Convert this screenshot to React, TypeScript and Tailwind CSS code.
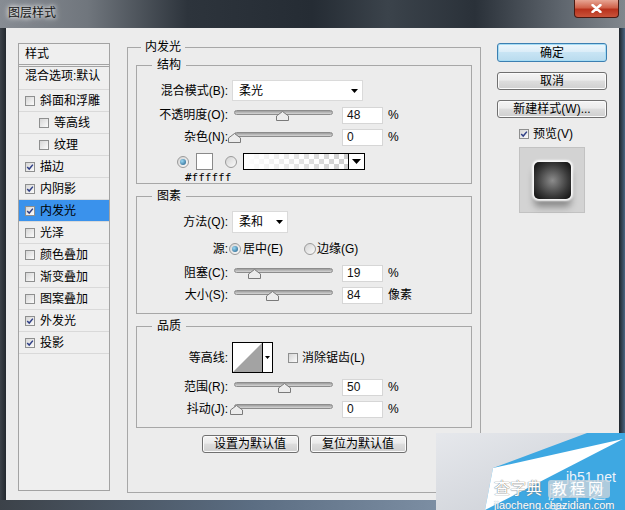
import React from 'react';

const F = "[font-family:'Liberation_Sans','Noto_Sans_CJK_SC',sans-serif]";

const effects = [
  { name: '斜面和浮雕', on: false },
  { name: '等高线', on: false, indent: true },
  { name: '纹理', on: false, indent: true },
  { name: '描边', on: true },
  { name: '内阴影', on: true },
  { name: '内发光', on: true, active: true },
  { name: '光泽', on: false },
  { name: '颜色叠加', on: false },
  { name: '渐变叠加', on: false },
  { name: '图案叠加', on: false },
  { name: '外发光', on: true },
  { name: '投影', on: true },
];

function Check({ on }: { on?: boolean }) {
  return (
    <span className="flex h-[10px] w-[10px] shrink-0 items-center justify-center border border-[#8e8f8f] bg-[linear-gradient(135deg,#d6d6d6,#fbfbfb)]">
      {on && (
        <svg viewBox="0 0 10 10" width="8" height="8">
          <path d="M1.5 5 L4 7.6 L8.6 2" fill="none" stroke="#2f3f86" strokeWidth="1.8" />
        </svg>
      )}
    </span>
  );
}

function Radio({ on }: { on?: boolean }) {
  return (
    <span className="flex h-[12px] w-[12px] shrink-0 items-center justify-center rounded-full border border-[#9a9a9a] bg-[linear-gradient(135deg,#d4d4d4,#fafafa)]">
      {on && <span className="h-[6px] w-[6px] rounded-full bg-[radial-gradient(circle_at_35%_35%,#9ad8f4,#1c5a85)]" />}
    </span>
  );
}

function Arrow() {
  return (
    <svg width="7" height="4" viewBox="0 0 7 4">
      <path d="M0 0 H7 L3.5 4 Z" fill="#000" />
    </svg>
  );
}

function Select({ value, w, h }: { value: string; w: string; h: string }) {
  return (
    <div className={`flex items-center justify-between border border-[#dadada] bg-white pl-[6px] pr-[4px] ${w} ${h}`}>
      <span>{value}</span>
      <Arrow />
    </div>
  );
}

function Slider({ pct }: { pct: number }) {
  return (
    <div className="relative h-[12px] w-[99px] shrink-0">
      <div className="absolute left-0 right-0 top-[1px] h-[5px] rounded-full border border-[#8c8c8c] bg-[linear-gradient(180deg,#9c9c9c,#d6d6d6)]" />
      <svg
        className="absolute top-[2px]"
        style={{ left: `calc(${pct}% - 6px)` }}
        width="13"
        height="10"
        viewBox="0 0 13 10"
      >
        <path d="M6.5 0.5 L12.5 5 V9.5 H0.5 V5 Z" fill="#ececec" stroke="#7a7a7a" />
      </svg>
    </div>
  );
}

function Field({ value }: { value: string }) {
  return (
    <div className="ml-[9px] flex h-[17px] w-[41px] items-center border border-[#d6d6d6] bg-white pl-[4px] text-[#111]">
      {value}
    </div>
  );
}

function SliderRow({ label, value, pct, unit = '%' }: { label: string; value: string; pct: number; unit?: string }) {
  return (
    <div className="flex h-[22px] items-center">
      <span className="w-[91px] shrink-0 text-right">{label}</span>
      <span className="ml-[6px]">
        <Slider pct={pct} />
      </span>
      <Field value={value} />
      <span className="ml-[5px]">{unit}</span>
    </div>
  );
}

function Btn({ children, primary, w, h }: { children: React.ReactNode; primary?: boolean; w: string; h: string }) {
  return (
    <div
      className={`flex items-center justify-center rounded-[3px] border ${w} ${h} ${
        primary
          ? 'border-[#3c7fb1] bg-[linear-gradient(180deg,#eef7fc_0%,#dcedf8_45%,#c8e4f4_50%,#b9dbee_100%)] shadow-[inset_0_0_0_1px_#a6dcf4]'
          : 'border-[#707070] bg-[linear-gradient(180deg,#f4f4f4_0%,#ebebeb_45%,#dddddd_50%,#cfcfcf_100%)] shadow-[inset_0_0_0_1px_#fbfbfb]'
      }`}
    >
      {children}
    </div>
  );
}

function GradientSwatch() {
  return (
    <div className="flex h-[17px] w-[122px] border border-black">
      <svg width="104" height="15" className="block">
        <defs>
          <pattern id="chk" width="10" height="10" patternUnits="userSpaceOnUse">
            <rect width="10" height="10" fill="#fff" />
            <rect width="5" height="5" fill="#cdcdcd" />
            <rect x="5" y="5" width="5" height="5" fill="#cdcdcd" />
          </pattern>
          <linearGradient id="fade" x1="0" x2="1">
            <stop offset="0" stopColor="#fff" stopOpacity="1" />
            <stop offset="1" stopColor="#fff" stopOpacity="0" />
          </linearGradient>
        </defs>
        <rect width="104" height="15" fill="url(#chk)" />
        <rect width="104" height="15" fill="url(#fade)" />
      </svg>
      <div className="flex w-[16px] items-center justify-center border-l border-black bg-white">
        <svg width="9" height="5" viewBox="0 0 9 5">
          <path d="M0 0 H9 L4.5 5 Z" fill="#000" />
        </svg>
      </div>
    </div>
  );
}

function Contour() {
  return (
    <div className="flex h-[31px] w-[41px] border border-black bg-white">
      <svg width="29" height="29" className="block">
        <path d="M0 29 L29 0 V29 Z" fill="#a3a3a3" />
      </svg>
      <div className="flex w-[10px] items-center justify-center border-l border-black bg-white">
        <svg width="5" height="3" viewBox="0 0 5 3">
          <path d="M0 0 H5 L2.5 3 Z" fill="#000" />
        </svg>
      </div>
    </div>
  );
}

function Watermark() {
  return (
    <div className="absolute left-[436px] top-[433px] h-[77px] w-[189px] overflow-hidden">
      <svg width="189" height="77" className="absolute inset-0">
        <defs>
          <linearGradient id="wmbg" x1="0" x2="1" y1="0" y2="1">
            <stop offset="0" stopColor="#e6e8ec" />
            <stop offset="1" stopColor="#c8ccd3" />
          </linearGradient>
        </defs>
        <rect width="189" height="77" fill="url(#wmbg)" />
        <path d="M151 0 H189 V77 H49 L57 35 Z" fill="#3ea8e2" />
        <path d="M57 35 L187 6 L49 77 Z" fill="#ffffff" />
      </svg>
      <span className="absolute left-[130px] top-[36px] text-[14px] leading-[16px] text-[#eef4fa]">jb51.net</span>
      <span className="absolute left-[112px] top-[50px] text-[18px] leading-[20px] tracking-[2px] text-white/80">脚本之家</span>
      <span className="absolute left-[58px] top-[47px] text-[16px] leading-[18px] text-white [text-shadow:0_0_1px_#777,0_0_1px_#777]">查字典</span>
      <span className="absolute left-[112px] top-[47px] flex h-[18px] w-[62px] items-center justify-center rounded-[3px] bg-[#c9d3dc]/80 text-[15px] tracking-[3px] text-white">教程网</span>
      <span className="absolute left-[58px] top-[66px] text-[11px] leading-[12px] text-white [text-shadow:0_0_1px_#5a7a99]">jiaocheng.chazidian.com</span>
    </div>
  );
}

export default function App() {
  return (
    <div className={`relative flex h-[510px] w-[625px] flex-col overflow-hidden bg-[#2c3239] text-[12px] text-black ${F}`}>
      {/* title bar */}
      <div className="flex h-[28px] shrink-0 items-start bg-[linear-gradient(90deg,#878c93_0%,#70767d_14%,#2d343c_30%,#252c34_50%,#3b434b_62%,#2a3139_76%,#5f666e_90%,#81878d_100%)]">
        <span className="ml-[8px] mt-[6px] leading-[14px] text-[#151515] [text-shadow:0_0_4px_#fff,0_0_7px_#fff]">图层样式</span>
        <div className="ml-auto mr-[6px] flex h-[18px] w-[45px] items-center justify-center rounded-b-[4px] border border-t-0 border-[#4a1a12] bg-[linear-gradient(180deg,#e7a593_0%,#d0624a_45%,#b8321c_55%,#c9533a_100%)]">
          <svg width="11" height="9" viewBox="0 0 11 9">
            <path d="M1.5 1 L9.5 8 M9.5 1 L1.5 8" stroke="#fff" strokeWidth="2.4" strokeLinecap="round" />
          </svg>
        </div>
      </div>

      <div className="flex h-[472px] shrink-0">
        <div className="w-[6px] bg-[linear-gradient(90deg,#3c4249,#23282e)]" />
        <div className="flex w-[613px] items-start bg-[#ececec]">
          {/* left list */}
          <div className="ml-[12px] mt-[15px] h-[448px] w-[92px] border border-[#a3a3a3] bg-[#efefef]">
            <div className="h-[21px] border-b border-[#a3a3a3] pl-[6px] leading-[20px]">样式</div>
            <div className="h-[2px] border-b border-[#a3a3a3]" />
            <div className="h-[23px] whitespace-nowrap border-b border-[#d9d9d9] pl-[6px] pt-[2px] leading-[14px]">混合选项:默认</div>
            {effects.map((e) => (
              <div
                key={e.name}
                className={`flex h-[22px] items-center border-b border-[#d9d9d9] ${e.indent ? 'pl-[20px]' : 'pl-[6px]'} ${
                  e.active ? 'bg-[#3a92ec]' : ''
                }`}
              >
                <Check on={e.on} />
                <span className="ml-[5px] whitespace-nowrap">{e.name}</span>
              </div>
            ))}
          </div>

          {/* main group */}
          <fieldset className="m-0 ml-[17px] mt-[12px] h-[453px] w-[354px] min-w-0 border border-[#a7a7a7] p-0">
            <legend className="ml-[13px] px-[4px] leading-[14px]">内发光</legend>
            <div className="px-[8px]">
              <fieldset className="m-0 mt-[4px] min-w-0 border border-[#a7a7a7] p-0">
                <legend className="ml-[15px] px-[5px] leading-[14px]">结构</legend>
                <div className="mt-[8px] flex h-[21px] items-center">
                  <span className="w-[91px] shrink-0 text-right">混合模式(B):</span>
                  <span className="ml-[4px]">
                    <Select value="柔光" w="w-[131px]" h="h-[21px]" />
                  </span>
                </div>
                <div className="mt-[3px]">
                  <SliderRow label="不透明度(O):" value="48" pct={48} />
                  <SliderRow label="杂色(N):" value="0" pct={0} />
                </div>
                <div className="mt-[5px] flex h-[17px] items-center">
                  <span className="ml-[40px]">
                    <Radio on />
                  </span>
                  <span className="ml-[7px] h-[17px] w-[17px] border border-[#8a8a8a] bg-white" />
                  <span className="ml-[12px]">
                    <Radio />
                  </span>
                  <span className="ml-[6px]">
                    <GradientSwatch />
                  </span>
                </div>
                <div className="ml-[48px] mt-[2px] h-[11px] text-[11px] leading-[11px] [font-family:'DejaVu_Sans_Mono',monospace]">#ffffff</div>
              </fieldset>

              <fieldset className="m-0 mt-[5px] min-w-0 border border-[#a7a7a7] p-0 pb-[7px]">
                <legend className="ml-[15px] px-[5px] leading-[14px]">图素</legend>
                <div className="mt-[8px] flex h-[22px] items-center">
                  <span className="w-[91px] shrink-0 text-right">方法(Q):</span>
                  <span className="ml-[4px]">
                    <Select value="柔和" w="w-[56px]" h="h-[22px]" />
                  </span>
                </div>
                <div className="mt-[8px] flex h-[16px] items-center">
                  <span className="w-[91px] shrink-0 text-right">源:</span>
                  <span className="ml-[1px]">
                    <Radio on />
                  </span>
                  <span className="ml-[2px] w-[61px]">居中(E)</span>
                  <Radio />
                  <span className="ml-[1px]">边缘(G)</span>
                </div>
                <div className="mt-[5px]">
                  <SliderRow label="阻塞(C):" value="19" pct={20} />
                  <SliderRow label="大小(S):" value="84" pct={38} unit="像素" />
                </div>
              </fieldset>

              <fieldset className="m-0 mt-[5px] min-w-0 border border-[#a7a7a7] p-0 pb-[7px]">
                <legend className="ml-[15px] px-[5px] leading-[14px]">品质</legend>
                <div className="mt-[9px] flex h-[31px] items-center">
                  <span className="w-[91px] shrink-0 text-right">等高线:</span>
                  <span className="ml-[4px]">
                    <Contour />
                  </span>
                  <span className="ml-[15px]">
                    <Check />
                  </span>
                  <span className="ml-[4px]">消除锯齿(L)</span>
                </div>
                <div className="mt-[3px]">
                  <SliderRow label="范围(R):" value="50" pct={51} />
                  <SliderRow label="抖动(J):" value="0" pct={2} />
                </div>
              </fieldset>

              <div className="mt-[7px] flex justify-center gap-[11px]">
                <Btn w="w-[97px]" h="h-[18px]">设置为默认值</Btn>
                <Btn w="w-[97px]" h="h-[18px]">复位为默认值</Btn>
              </div>
            </div>
          </fieldset>

          {/* right column */}
          <div className="ml-[16px] mt-[15px] flex w-[110px] flex-col">
            <Btn primary w="w-[110px]" h="h-[19px]">确定</Btn>
            <div className="mt-[10px]">
              <Btn w="w-[110px]" h="h-[18px]">取消</Btn>
            </div>
            <div className="mt-[10px]">
              <Btn w="w-[110px]" h="h-[18px]">新建样式(W)...</Btn>
            </div>
            <div className="mt-[9px] flex h-[14px] items-center pl-[22px]">
              <Check on />
              <span className="ml-[4px]">预览(V)</span>
            </div>
            <div className="ml-[22px] mt-[6px] flex h-[66px] w-[66px] items-center justify-center border border-[#c2c2c2] bg-[#d3d3d3]">
              <div className="h-[37px] w-[37px] rounded-[5px] bg-[radial-gradient(circle,#8c8c8c_0%,#3a3a3a_60%,#0c0c0c_100%)] shadow-[0_0_2px_2px_#fafafa,0_8px_7px_rgba(0,0,0,0.35)]" />
            </div>
          </div>
        </div>
        <div className="w-[6px] bg-[linear-gradient(90deg,#1f2429,#4a6480)]" />
      </div>
      <div className="h-[10px] shrink-0 bg-[linear-gradient(90deg,#3c4249,#5b6d82_40%,#7c8ea3_70%,#4c6580)]" />

      <Watermark />
    </div>
  );
}
